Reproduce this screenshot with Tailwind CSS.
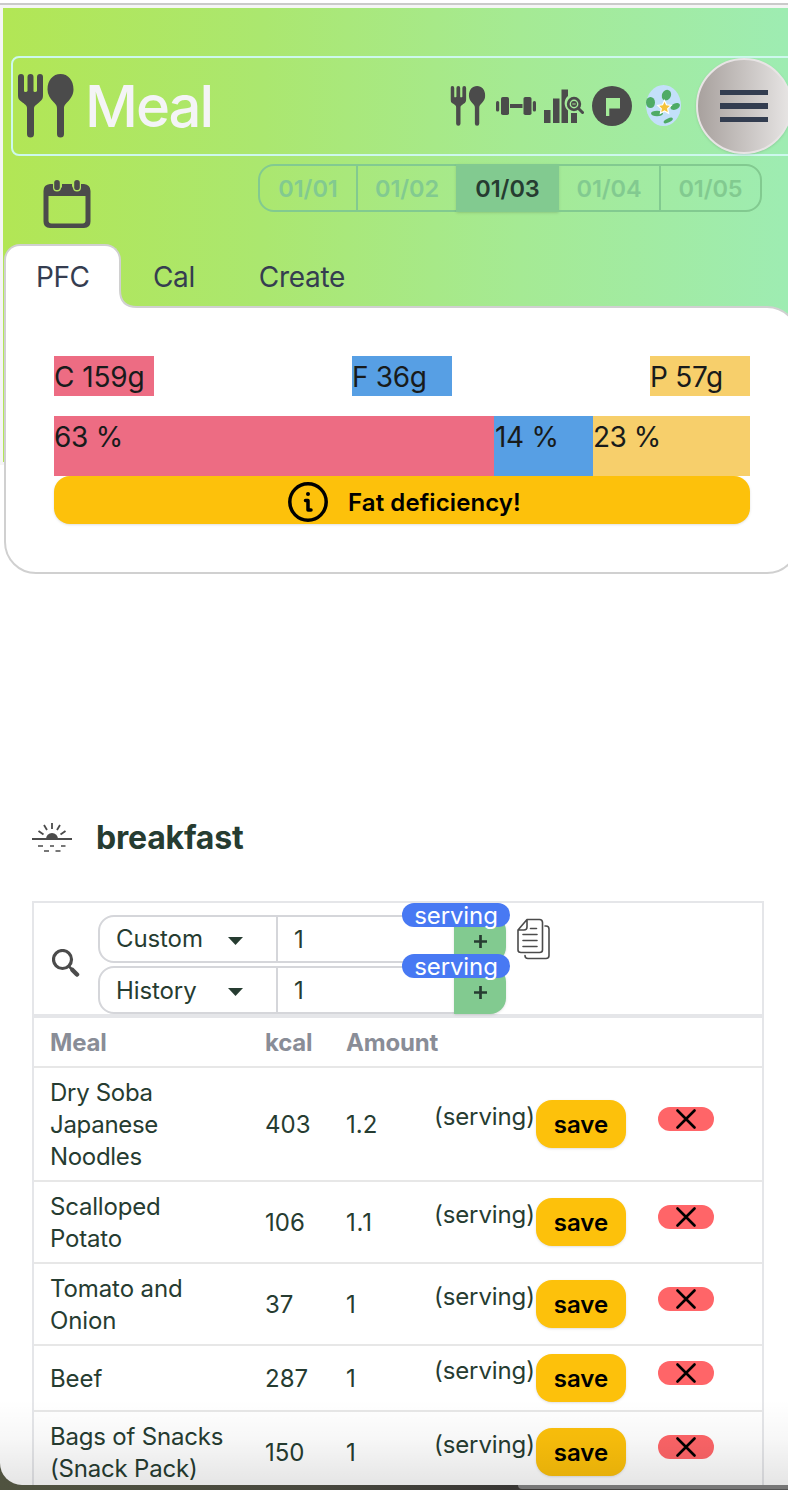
<!DOCTYPE html>
<html lang="en">
<head>
<meta charset="utf-8">
<title>Meal</title>
<script src="https://cdn.jsdelivr.net/npm/@tailwindcss/browser@4"></script>
</head>
<body class="bg-[#50503f]">
<svg class="hidden">
  <symbol id="cutlery" viewBox="0 0 56 64">
    <path fill="#4b4b4b" d="M0 3a3 3 0 0 1 6 0v14q0 1 1.500 1T9.500 17V3a3 3 0 0 1 6 0v14q0 1 1.500 1t2-1V3a3 3 0 0 1 6 0v18c0 4-1 5-4 7.500S16 32 16 34v26a3.500 3.500 0 0 1-7 0V34c0-2-1-3-4.500-5.500S0 25 0 21ZM42.500 0C50 0 55.500 6 55.500 15.500c0 5-2.500 9-6 12.500-3 3-3.500 4-3.500 7v25a3.500 3.500 0 0 1-7 0V35c0-3-.5-4-3.500-7-3.500-3.500-6-7.500-6-12.500C29.500 6 35 0 42.500 0Z"/>
  </symbol>
  <symbol id="cross" viewBox="0 0 20 20"><path d="M1.500 1.500l17 17M18.500 1.500l-17 17" stroke="#000" stroke-width="2.600" stroke-linecap="round"/></symbol>
</svg>
<div class="relative w-[788px] h-[1490px] overflow-hidden bg-[linear-gradient(90deg,#505340,#48483e_40%,#383634_65%,#555)] font-['Inter','Liberation_Sans',sans-serif] text-[#263c31]">
 <div class="h-[1485px] overflow-hidden bg-white rounded-bl-[22px] relative">
  <div class="h-[465px] bg-[#f5f5f5]">
   <div class="h-[3px] bg-white"></div>
   <div class="h-[2px] bg-[#cacaca]"></div>
   <header class="ml-[3px] mt-[3px] h-[454px] pt-12 bg-[linear-gradient(90deg,#b2e655,#abe76f_33%,#a5ea94_66%,#9eecb2)]">
    <nav class="ml-2 w-[800px] h-[100px] border-2 border-[#cdf8ed] rounded-lg flex items-center pl-[5px]">
      <svg class="w-14 h-16 shrink-0"><use href="#cutlery"/></svg>
      <div class="ml-[11px] w-[363px] text-[58px] font-[450] leading-none tracking-[-2px] text-[#f4f4f6]">Meal</div>
      <div class="flex items-center gap-2 shrink-0">
        <svg class="w-10 h-10" viewBox="0 0 40 40"><use href="#cutlery" x="2.500" width="35" height="40"/></svg>
        <svg class="w-10 h-10" viewBox="0 0 40 40" fill="#4b4b4b"><rect y="15" width="3.200" height="10.500" rx="1.500"/><rect x="5" y="11" width="8" height="18" rx="1.800"/><rect x="14" y="18" width="12.500" height="4"/><rect x="27.500" y="11" width="8" height="18" rx="1.800"/><rect x="36.800" y="15" width="3.200" height="10.500" rx="1.500"/></svg>
        <svg class="w-10 h-10" viewBox="0 0 40 40" fill="#4b4b4b"><path d="M0 24h6.500v13H0zM9 12.500h6.500V37H9zM17.500 3.500H24v6.500a9.500 9.500 0 0 0 0 14.500V37h-6.500zM27 27h6v10h-6z"/><circle cx="30" cy="18" r="5.800" fill="none" stroke="#4b4b4b" stroke-width="2.800"/><path d="M34.500 22.500l4 4" stroke="#4b4b4b" stroke-width="3" stroke-linecap="round"/><circle cx="30" cy="18" r="3"/><path d="M28.300 18h3.400" stroke="#a6ea92"/></svg>
        <svg class="w-10 h-10" viewBox="0 0 40 40"><circle cx="20" cy="20" r="20" fill="#4b4b4b"/><path fill="#a4eb99" d="M14 12h14v10.500H17.300V30H14z"/></svg>
        <svg class="w-12 h-[42px]" viewBox="0 0 48 42"><ellipse cx="23.500" cy="20.500" rx="17.500" ry="20.500" fill="#c3e0fa"/><g fill="#4eab65"><ellipse cx="26.500" cy="10" rx="4.500" ry="5.500" transform="rotate(25 26 10)"/><ellipse cx="10.500" cy="17.500" rx="4.500" ry="5.500"/><ellipse cx="35" cy="21.500" rx="5" ry="3" transform="rotate(-25 35 21)"/><ellipse cx="17" cy="28.500" rx="6" ry="2.700"/><ellipse cx="28" cy="35.500" rx="5" ry="2" transform="rotate(-25 28 35)"/></g><path d="m24.500 15.500 2 4.300 4.700.6-3.500 3.200.9 4.700-4.100-2.300-4.100 2.300.9-4.700-3.500-3.200 4.700-.6z" fill="#f5c33b" stroke="#fff" stroke-width="1.200"/></svg>
        <div class="w-24 h-24 rounded-full border-2 border-[#e8e4e5] bg-linear-to-r from-[#a8a19e] to-[#e7e5e4] shadow-sm flex flex-col items-center justify-center gap-2">
          <div class="w-12 h-[5px] bg-[#333d50]"></div><div class="w-12 h-[6px] bg-[#333d50]"></div><div class="w-12 h-[5px] bg-[#333d50]"></div>
        </div>
      </div>
    </nav>
    <div class="flex h-[88px]">
      <svg class="w-12 h-12 ml-10 mt-6 shrink-0" viewBox="0 0 48 48"><path fill="#4b4b4b" d="M7 4h3a6 6 0 0 0 0 1.500a5 5.500 0 0 0 9 1.500V4h10v2a5 5.500 0 0 0 9 1V4h3q6.500 1 6.500 7v30.500q0 6.500-6.500 6.500H7Q.5 48 .5 41.500V11Q.5 4.500 7 4ZM5.500 16v24.500q0 3 3 3h31q3 0 3-3V16z" fill-rule="evenodd"/><rect x="10" y="-1" width="8" height="12.500" rx="4" fill="#afe65f"/><rect x="30" y="-1" width="8" height="12.500" rx="4" fill="#afe65f"/><rect x="11.200" y="0" width="5.600" height="10" rx="2.800" fill="#4b4b4b"/><rect x="31.200" y="0" width="5.600" height="10" rx="2.800" fill="#4b4b4b"/></svg>
      <div class="ml-[167px] mt-2 w-[504px] h-12 flex text-[23.500px] leading-[46px] font-semibold text-[#82ca90] tracking-[-0.1px]">
        <div class="w-[100px] border-2 rounded-l-2xl text-center">01/01</div>
        <div class="w-[98px] border-y-2 text-center">01/02</div>
        <div class="w-[103px] pt-[2px] bg-[#82ca90] text-[#263c31] shadow-sm text-center">01/03</div>
        <div class="w-[100px] border-y-2 border-[#82ca90] text-center">01/04</div>
        <div class="w-[103px] border-2 border-[#82ca90] rounded-r-2xl text-center">01/05</div>
      </div>
    </div>
    <div class="relative z-10 flex h-16 ml-[1px] text-[28px] text-[#353d50]">
      <div class="w-[117px] h-16 bg-white border-2 border-b-0 border-[#d0d0d0] rounded-t-2xl pl-[30px] pt-[10px] leading-[42px] tracking-[-0.5px]">PFC</div>
      <svg class="absolute left-[115px] top-[46px] w-[18px] h-[18px]" viewBox="0 0 18 18"><path d="M0 0v18h18v-1Q1 17 1 0z" fill="#fff"/><path d="M1 0Q1 17 18 17" fill="none" stroke="#d0d0d0" stroke-width="2"/></svg>
      <div class="ml-8 pt-3 leading-[42px] tracking-[-0.4px]">Cal</div>
      <div class="ml-16 pt-3 leading-[42px] tracking-[-0.3px]">Create</div>
    </div>
    <section class="ml-[1px] -mt-[2px] w-[795px] h-[268px] rounded-[32px] rounded-tl-none border-2 border-[#d0d0d0] bg-white pl-12 pt-12 text-[28px] leading-[42px] text-[#181b1b]">
      <div class="w-[696px]">
        <div class="flex justify-between tracking-[-0.1px]">
          <div class="w-[100px] h-10 bg-[#ed6c83] whitespace-nowrap">C 159g</div>
          <div class="w-[100px] h-10 bg-[#579fe4] tracking-[-0.300px]">F 36g</div>
          <div class="w-[100px] h-10 bg-[#f7cf6b] tracking-[-0.300px]">P 57g</div>
        </div>
        <div class="mt-5 flex h-[60px] tracking-[-0.3px]">
          <div class="w-[440px] bg-[#ed6c83]">63 %</div>
          <div class="w-[99px] bg-[#579fe4] pl-px">14 %</div>
          <div class="grow bg-[#f7cf6b] tracking-[-0.5px]">23 %</div>
        </div>
        <div class="h-12 rounded-2xl bg-[#fdc10b] shadow-sm flex items-center pl-[234px] pt-1 text-black text-[24px] font-semibold tracking-[0.1px]">
          <svg class="w-10 h-10" viewBox="0 0 40 40" fill="none" stroke="#000" stroke-width="3.500"><circle cx="20" cy="20" r="18.200"/><circle cx="20" cy="12" r="2" fill="#000" stroke="none"/><path d="M17.500 18.500H20v9.500h3" stroke-linecap="round" stroke-linejoin="round"/></svg>
          <span class="ml-5 pt-[2px]">Fat deficiency!</span>
        </div>
      </div>
    </section>
   </header>
  </div>
  <main class="pt-[353px] pl-8">
    <div class="h-[40px] flex items-center">
      <svg class="w-10 h-8" viewBox="0 0 40 32" stroke="#4b4b4b" stroke-width="1.800"><path d="M14 17a6 6 0 0 1 12 0" fill="#4b4b4b" stroke="none"/><path d="M0 17h40M20 1v6M12 3l3 5M28 3l-3 5M6.500 9l5 3.500M33.500 9l-5 3.500"/><path d="M6 24h5M18 24h4M29 24h4.500M12 29h5M23.500 29h5" stroke-width="1.400"/></svg>
      <h2 class="ml-6 text-[32px] font-bold tracking-[-0.200px]">breakfast</h2>
    </div>
    <div class="mt-[43px] w-[732px] h-[620px] border-2 border-[#e5e6e9] text-[24px] leading-8">
      <div class="h-[115px] border-b-4 border-[#e5e6e9] flex pt-3">
        <svg class="ml-[18px] mt-[34px] w-7 h-7 shrink-0" viewBox="0 0 28 28" fill="none" stroke="#4b4b4b"><circle cx="10.500" cy="10.500" r="9" stroke-width="3.200"/><path d="M17 17.500l4 4" stroke-width="2.500"/><path d="M20.500 21l4.500 4.500" stroke-width="4.500" stroke-linecap="round"/></svg>
        <div class="ml-[18px] w-[408px] flex flex-col gap-[3px]">
          <div class="relative h-12 flex">
            <div class="w-[180px] border-2 border-[#d5d6da] rounded-l-2xl pl-4 pt-[6px] tracking-[-0.1px]">Custom<svg class="absolute left-[130px] top-[22px] w-[15px] h-2" viewBox="0 0 14 8" preserveAspectRatio="none"><path d="M0 0h14L7 8z" fill="#263c31"/></svg></div>
            <div class="w-[176px] border-y-2 border-[#d5d6da] pl-4 pt-[7px]">1</div>
            <div class="w-[52px] bg-[#82ca90] rounded-r-2xl flex items-center justify-center pt-1 shadow-sm"><svg class="w-[13px] h-[13px]" viewBox="0 0 14 14"><path d="M7 0v14M0 7h14" stroke="#263c31" stroke-width="2.900"/></svg></div>
            <div class="absolute left-[304px] -top-3 w-[108px] h-6 rounded-full bg-[#4879f3] text-white text-center leading-[26px] tracking-[-0.1px]">serving</div>
          </div>
          <div class="relative h-12 flex">
            <div class="w-[180px] border-2 border-[#d5d6da] rounded-l-2xl pl-4 pt-[7px] tracking-[-0.1px]">History<svg class="absolute left-[130px] top-[22px] w-[15px] h-2" viewBox="0 0 14 8" preserveAspectRatio="none"><path d="M0 0h14L7 8z" fill="#263c31"/></svg></div>
            <div class="w-[176px] border-y-2 border-[#d5d6da] pl-4 pt-[7px]">1</div>
            <div class="w-[52px] bg-[#82ca90] rounded-r-2xl flex items-center justify-center pt-1 shadow-sm"><svg class="w-[13px] h-[13px]" viewBox="0 0 14 14"><path d="M7 0v14M0 7h14" stroke="#263c31" stroke-width="2.900"/></svg></div>
            <div class="absolute left-[304px] -top-3 w-[108px] h-6 rounded-full bg-[#4879f3] text-white text-center leading-[26px] tracking-[-0.1px]">serving</div>
          </div>
        </div>
        <svg class="ml-[10px] mt-[3px] w-9 h-[42px] shrink-0" viewBox="0 0 36 42" fill="none" stroke="#4b4b4b" stroke-width="1.600" stroke-linejoin="round" stroke-linecap="round"><path d="M11 1.500h12.500q3 0 3 3V32q0 2.500-3 2.500H5q-3 0-3-2.500V12zM11 1.500V9q0 3-3 3H2M29 8h1q3 0 3 3v26.500q0 3-3 3H12q-3 0-3-3"/><path d="M14.500 10.500h6M7 16.500h14M7 22.500h14M7 28.500h14"/></svg>
      </div>
      <div class="h-[50px] pt-[2px] border-b-2 border-[#e7e7e7] flex items-center pl-4 font-bold text-[#898d97] tracking-[-0.2px]"><div class="w-[215px]">Meal</div><div class="w-[81px]">kcal</div><div>Amount</div></div>

      <div class="h-[114px] border-b-2 border-[#e7e7e7] flex items-center pl-4"><div class="w-[215px] pt-[2px] tracking-[-0.3px]">Dry Soba<br>Japanese<br>Noodles</div><div class="w-[81px] pt-[2px]">403</div><div class="w-[88px] pt-[2px]">1.2</div><div class="w-[102px] -mt-[14px] tracking-[-0.1px]">(serving)</div><div class="w-[90px] h-12 rounded-2xl bg-[#fdc10b] text-black font-semibold text-center leading-[49px] shadow-sm">save</div><div class="ml-8 w-14 h-6 -mt-[10px] rounded-full bg-[#ff6568] flex items-center justify-center"><svg class="w-5 h-5"><use href="#cross"/></svg></div></div>
      <div class="h-[82px] border-b-2 border-[#e7e7e7] flex items-center pl-4"><div class="w-[215px] pt-[2px] tracking-[-0.2px]">Scalloped<br>Potato</div><div class="w-[81px] pt-[2px]">106</div><div class="w-[88px] pt-[2px] tracking-[0.800px]">1.1</div><div class="w-[102px] -mt-[14px] tracking-[-0.1px]">(serving)</div><div class="w-[90px] h-12 rounded-2xl bg-[#fdc10b] text-black font-semibold text-center leading-[49px] shadow-sm">save</div><div class="ml-8 w-14 h-6 -mt-[10px] rounded-full bg-[#ff6568] flex items-center justify-center"><svg class="w-5 h-5"><use href="#cross"/></svg></div></div>
      <div class="h-[82px] border-b-2 border-[#e7e7e7] flex items-center pl-4"><div class="w-[215px] pt-[2px] tracking-[-0.1px]">Tomato and<br>Onion</div><div class="w-[81px] pt-[2px]">37</div><div class="w-[88px] pt-[2px]">1</div><div class="w-[102px] -mt-[14px] tracking-[-0.1px]">(serving)</div><div class="w-[90px] h-12 rounded-2xl bg-[#fdc10b] text-black font-semibold text-center leading-[49px] shadow-sm">save</div><div class="ml-8 w-14 h-6 -mt-[10px] rounded-full bg-[#ff6568] flex items-center justify-center"><svg class="w-5 h-5"><use href="#cross"/></svg></div></div>
      <div class="h-[66px] border-b-2 border-[#e7e7e7] flex items-center pl-4"><div class="w-[215px] pt-[2px] tracking-[-0.1px]">Beef</div><div class="w-[81px] pt-[2px]">287</div><div class="w-[88px] pt-[2px]">1</div><div class="w-[102px] -mt-[14px] tracking-[-0.1px]">(serving)</div><div class="w-[90px] h-12 rounded-2xl bg-[#fdc10b] text-black font-semibold text-center leading-[49px] shadow-sm">save</div><div class="ml-8 w-14 h-6 -mt-[10px] rounded-full bg-[#ff6568] flex items-center justify-center"><svg class="w-5 h-5"><use href="#cross"/></svg></div></div>
      <div class="h-[82px] border-b-2 border-[#e7e7e7] flex items-center pl-4"><div class="w-[215px] pt-[2px] tracking-[-0.2px]">Bags of Snacks<br>(Snack Pack)</div><div class="w-[81px] pt-[2px]">150</div><div class="w-[88px] pt-[2px]">1</div><div class="w-[102px] -mt-[14px] tracking-[-0.1px]">(serving)</div><div class="w-[90px] h-12 rounded-2xl bg-[#fdc10b] text-black font-semibold text-center leading-[49px] shadow-sm">save</div><div class="ml-8 w-14 h-6 -mt-[10px] rounded-full bg-[#ff6568] flex items-center justify-center"><svg class="w-5 h-5"><use href="#cross"/></svg></div></div>
    </div>
  </main>
  <div class="absolute inset-x-0 bottom-0 h-[85px] bg-[linear-gradient(180deg,#0000,#00000008_45%,#0000001a)]"></div>
 </div>
 <div class="absolute right-0 bottom-[1px] w-[270px] h-1 rounded-bl-full bg-[#777]"></div>
</div>
</body>
</html>
